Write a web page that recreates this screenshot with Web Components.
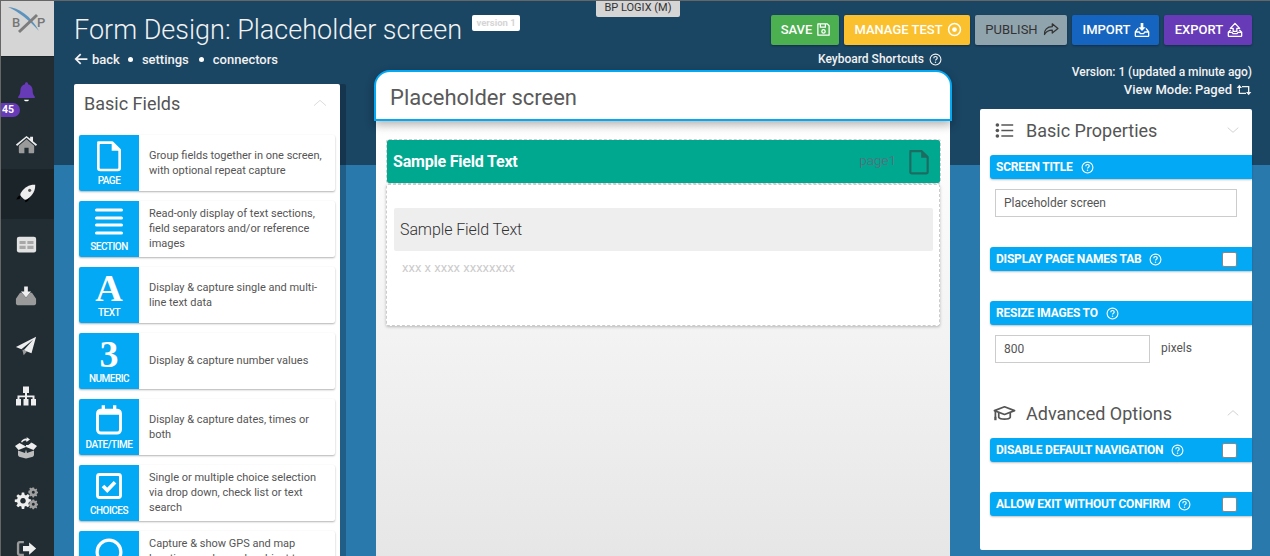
<!DOCTYPE html>
<html>
<head>
<meta charset="utf-8">
<title>Form Design</title>
<style>
  html, body { margin: 0; height: 100%; overflow: hidden; background: #2a79ad; }
  body { font-family: Roboto, "Liberation Sans", sans-serif; }
</style>
</head>
<body>
<bp-app></bp-app>

<script>
// shared icon set, all drawn on a 24 box
const ICONS = {
  bell: '<path fill="currentColor" d="M12 1.5c1 0 1.7.7 1.7 1.6v.6c3.4.8 5.300 3.600 5.300 7 0 4 1 5.600 2.500 7.300.4.5.1 1.300-.6 1.300H3.100c-.7 0-1-.8-.6-1.300C4 16.300 5 14.700 5 10.700c0-3.400 1.900-6.200 5.300-7v-.6c0-.9.7-1.600 1.700-1.600z"/><path fill="#fff" d="M9.300 21.300h5.400c0 1.100-1.200 1.900-2.700 1.900s-2.700-.8-2.700-1.900z"/>',
  home: '<path fill="#9a9a9a" d="M12 6.500l8 6.700V20c0 .5-.4 1-1 1h-4.800v-5.500H9.800V21H5c-.6 0-1-.5-1-1v-6.800z"/><path fill="#eee" d="M12 3l3.800 3.100V3.800h3v4.800l4.200 3.500-1.200 1.500L12 5 2.200 13.600 1 12.100z"/>',
  rocket: '<path fill="#000" d="M7 13c-2.500.3-4.500 2-5.500 5l3.500-.5zM11.500 17.500L11 21c2.500-.8 4.500-2.500 5-5z"/><path fill="#eee" d="M22 2c.4 6-2.500 11.500-8.500 15.500-1.500 1-3 1-4.300-.2l-2.500-2.500c-1.200-1.300-1.200-2.800-.2-4.300C10.500 4.500 16 1.600 22 2z"/><circle cx="16" cy="8" r="1.700" fill="#555"/>',
  table: '<rect x="1" y="3" width="22" height="18" rx="2.500" fill="#e2e2e2"/><path fill="#a8a8a8" d="M4 8h7v3.500H4zM13 8h7v3.500h-7zM4 13.500h7V17H4zM13 13.500h7V17h-7z"/>',
  inbox: '<path fill="#9a9a9a" d="M5.500 8.500h2L12 14l4.500-5.500h2L23 15v5c0 1-.8 2-2 2H3c-1.200 0-2-1-2-2v-5z"/><path fill="#eee" d="M10 1.500h4V7h3.500L12 13.500 6.500 7H10z"/>',
  plane: '<path fill="#eee" d="M23 2L1 13l6 2.500L20 5 9.500 16.500 18 20z"/><path fill="#9a9a9a" d="M8 16l1.500 0 3.500 2-3.500 4z"/>',
  sitemap: '<path fill="#eee" d="M9 1.500h6V8h-2v2.500h7.500V14H22v6.500h-5V14h1.500v-1.700H13V14h1.500v6.500h-5V14H11v-1.700H5.500V14H7v6.500H2V14h1.500v-3.500H11V8H9z"/>',
  boxopen: '<path fill="#eee" d="M1 10l4.500-3 6.500 3.500L18.500 7l4.500 3-3.500 4-7.500-3-7.500 3z"/><path fill="#bdbdbd" d="M4 14.500l7 2.500 1-3.500 1 3.500 7-2.500V19c0 .8-1 1.600-2 2l-6 1.500L6 21c-1-.4-2-1.200-2-2z"/><path fill="#eee" d="M7 6c1-2.500 3.500-4 6-3.500L12.500 1l3.500 2.500-3.500 2.500-.3-1.500c-1.700 0-3.200.5-4 2zM12 9c2.500.3 4.300-.7 5-2.500l1.300.6c-1 2.600-3.300 3.900-6.300 3.400z"/>',
  gears: '<path fill="#eee" fill-rule="evenodd" d="M7.800 6.500h2.400l.4 2.300 1.400.6 1.900-1.300 1.700 1.700-1.300 1.900.6 1.400 2.300.4v2.400l-2.300.4-.6 1.400 1.300 1.900-1.700 1.700-1.900-1.300-1.400.6-.4 2.300H7.800l-.4-2.300-1.400-.6-1.900 1.300-1.700-1.700 1.300-1.900-.6-1.400L.8 16v-2.400l2.300-.4.6-1.400-1.300-1.900 1.700-1.700L6 9.500l1.400-.6zM9 12a2.800 2.800 0 1 0 .01 0z"/><path fill="#a0a0a0" fill-rule="evenodd" d="M18.500 1.500h1.600l.3 1.200 1 .5 1-.6.800 1-.6 1 .4.900 1 .3v1.500l-1 .3-.4 1 .6 1-.9.900-1-.6-1 .4-.3 1.100h-1.500l-.3-1.100-1-.4-1 .6-.9-.9.600-1-.4-1-1.100-.3V4.800l1.100-.3.400-.9-.6-1 .9-1 1 .6 1-.5zm.8 3.200a1.500 1.500 0 1 0 .01 0zM18.500 13.500h1.600l.3 1.100 1 .5 1-.6.800 1-.6 1 .4.900 1 .3v1.500l-1 .3-.4 1 .6 1-.9.900-1-.6-1 .4-.3 1.100h-1.500l-.3-1.100-1-.4-1 .6-.9-.9.600-1-.4-1-1.100-.3v-1.500l1.100-.3.400-.9-.6-1 .9-1 1 .6 1-.5zm.8 3.200a1.500 1.500 0 1 0 .01 0z"/>',
  signout: '<path fill="#9a9a9a" d="M9 3.500v2.500H4.500c-.5 0-.8.300-.8.800v10.400c0 .5.300.8.800.8H9v2.500H4.200C2.400 20.500 1 19.100 1 17.300V6.700C1 4.900 2.400 3.500 4.200 3.500z"/><path fill="#eee" d="M15 5l8 7-8 7v-4H8V9h7z"/>',
  file: '<path fill="none" stroke="currentColor" stroke-width="2" stroke-linejoin="round" d="M4 2h10.500L20 7.500V21a1.500 1.500 0 0 1-1.500 1.500h-13A1.500 1.500 0 0 1 4 21V3.500A1.500 1.500 0 0 1 5.500 2z"/><path fill="currentColor" d="M14 2l6 6h-6z"/>',
  lines: '<path fill="none" stroke="currentColor" stroke-width="2.400" stroke-linecap="round" d="M2 2.400h20M2 8.800h20M2 14.400h20M2 20.800h20"/>',
  calendar: '<rect x="3.400" y="4.600" width="17.200" height="17.200" rx="2.500" fill="none" stroke="currentColor" stroke-width="2.200"/><path fill="currentColor" d="M6.500 1h2.500v4H6.500zM15 1h2.500v4H15zM3.400 4.500h17.200V8H3.400z"/>',
  check: '<rect x="3.400" y="3.400" width="17.200" height="17.200" rx="1.500" fill="none" stroke="currentColor" stroke-width="2.200"/><path fill="none" stroke="currentColor" stroke-width="2.800" d="M7.500 12l3.200 3.200 5.800-6"/>',
  circle: '<circle cx="12" cy="12" r="9.500" fill="none" stroke="currentColor" stroke-width="2.600"/>',
  help: '<circle cx="12" cy="12" r="10" fill="none" stroke="currentColor" stroke-width="2"/><path fill="none" stroke="currentColor" stroke-width="2.200" d="M8.800 9.500c0-1.800 1.400-3 3.200-3s3.200 1.100 3.200 2.800c0 2.400-3.200 2.500-3.200 4.700"/><circle cx="12" cy="17" r="1.400" fill="currentColor"/>',
  save: '<path fill="none" stroke="currentColor" stroke-width="2" stroke-linejoin="round" d="M3 3h15l3 3v15H3z"/><path fill="none" stroke="currentColor" stroke-width="2" d="M7 3v5h8V3"/><circle cx="12" cy="15" r="2.700" fill="none" stroke="currentColor" stroke-width="2"/>',
  target: '<circle cx="12" cy="12" r="9.500" fill="none" stroke="currentColor" stroke-width="2.400"/><circle cx="12" cy="12" r="3.800" fill="currentColor"/>',
  share: '<path fill="none" stroke="currentColor" stroke-width="1.800" stroke-linejoin="round" d="M14.500 4l8 6.500-8 6.500v-4c-5 0-8.500 1.500-11 6-.8-6.500 4-11 11-11z"/>',
  import: '<path fill="currentColor" d="M10 1.500h4V8h3.500L12 13.500 6.500 8H10z"/><path fill="none" stroke="currentColor" stroke-width="2" stroke-linejoin="round" d="M6 9.500L2 15v5.500c0 .5.500 1 1 1h18c.5 0 1-.5 1-1V15l-4-5.500M2 15h6l1.500 2.500h5L16 15h6"/>',
  export: '<path fill="none" stroke="currentColor" stroke-width="2" stroke-linejoin="round" d="M12 2L5 9.500h4.200V14h5.600V9.500H19z"/><path fill="none" stroke="currentColor" stroke-width="2" stroke-linejoin="round" d="M5.500 12L2 15.500v5c0 .5.500 1 1 1h18c.5 0 1-.5 1-1v-5L18.500 12M2 15.500h5.500l1.500 2h6l1.500-2H22"/>',
  retweet: '<path fill="none" stroke="currentColor" stroke-width="2" d="M5 7v10h10M19 17V7H9"/><path fill="currentColor" d="M1 9l4-5 4 5zM15 15l4 5 4-5z"/>',
  list: '<circle cx="3" cy="5" r="2.300" fill="currentColor"/><circle cx="3" cy="12" r="2.300" fill="currentColor"/><circle cx="3" cy="19" r="2.300" fill="currentColor"/><path fill="currentColor" d="M8 4h15v2H8zM8 11h15v2H8zM8 18h15v2H8z"/>',
  grad: '<path fill="none" stroke="currentColor" stroke-width="1.800" stroke-linejoin="round" d="M1.500 9L12 5l10.500 4L12 13z"/><path fill="none" stroke="currentColor" stroke-width="1.800" d="M6 11.500V16c1.500 2.500 10.500 2.500 12 0v-4.500M2.500 9.500V16"/><rect x="1.300" y="15.500" width="2.400" height="3.500" fill="currentColor"/>',
  back: '<path fill="none" stroke="currentColor" stroke-width="3" d="M23 12H3.500M11.500 3.500L3 12l8.500 8.500"/>',
  chevron: '<path fill="none" stroke="currentColor" stroke-width="1.500" d="M3 16l9-8 9 8"/>'
};

function icon(name, size, extra = "") {
  return `<svg width="${size}" height="${size}" viewBox="0 0 24 24" style="display:block;flex:none;${extra}">${ICONS[name]}</svg>`;
}

class BpApp extends HTMLElement {
  constructor() {
    super();
    const shadow = this.attachShadow({ mode: "open" });
    shadow.innerHTML = `
      <style>
        :host { display: flex; width: 1270px; height: 556px; overflow: hidden; position: relative;
          box-sizing: border-box; border-top: 1px solid #666; border-left: 1px solid #666; color: #555;
          font-family: Roboto, "Liberation Sans", sans-serif; }
        main { flex: 1; min-width: 0; padding-right: 18px; padding-left: 20px; overflow: hidden;
          background: linear-gradient(#1a4563 164px, #2a79ad 164px); }
        .cols { display: flex; align-items: flex-start; }
        .tip { position: absolute; left: 595px; top: -1px; width: 84px; height: 17px; box-sizing: border-box;
          background: #d5d5d5; border-radius: 0 0 2px 2px; font-size: 11px; line-height: 16px;
          text-align: center; color: #333; }
      </style>
      <bp-nav></bp-nav>
      <main>
        <bp-header></bp-header>
        <div class="cols">
          <bp-fields></bp-fields>
          <bp-canvas></bp-canvas>
          <bp-props></bp-props>
        </div>
      </main>
      <div class="tip">BP LOGIX (M)</div>
    `;
  }
}

class BpNav extends HTMLElement {
  constructor() {
    super();
    const shadow = this.attachShadow({ mode: "open" });
    const items = [
      ["home", 50, 23], ["rocket", 50, 22, true], ["table", 51, 21], ["inbox", 51, 22], ["plane", 50, 22],
      ["sitemap", 51, 24], ["boxopen", 51, 24], ["gears", 50, 24], ["signout", 50, 21]
    ];
    shadow.innerHTML = `
      <style>
        :host { display: block; width: 53px; flex: none; background: #212d33; color: #dedede; position: relative; overflow: hidden; }
        .logo { height: 55px; background: #d5d5d5; border-bottom: 1px solid #1b2429; }
        .logo svg { display: block; }
        .bell { height: 62px; display: flex; align-items: flex-end; justify-content: center; color: #673ab7; padding: 0 3px 17px 0; box-sizing: border-box; }
        .badge { position: absolute; left: 0; top: 102px; width: 19px; height: 14px; border-radius: 0 8px 8px 0;
          background: #673ab7; color: #fff; font-size: 10.5px; font-weight: 700; line-height: 14px; padding-left: 1px; box-sizing: border-box; }
        .item { display: flex; align-items: center; justify-content: center; padding-right: 3px; }
        .item.on { background: #1b2429; }
      </style>
      <div class="logo">
        <svg width="53" height="55" viewBox="0 0 53 55">
          <path d="M7 6C17 6 30 15 38 30 28 19 18 11 7 6z" fill="#5b93bd"/>
          <path d="M18 31L36 14" stroke="#7d7d7d" stroke-width="3" fill="none"/>
          <text x="11" y="26" font-size="13" font-weight="500" fill="#777" font-family="Roboto, sans-serif">B</text>
          <text x="36" y="26" font-size="13" font-weight="500" fill="#777" font-family="Roboto, sans-serif">P</text>
        </svg>
      </div>
      <div class="bell">${icon("bell", 21)}</div>
      <div class="badge">45</div>
      ${items.map(([n, h, s, on]) => `<div class="item ${on ? "on" : ""}" style="height:${h}px">${icon(n, s)}</div>`).join("")}
    `;
  }
}

class BpButton extends HTMLElement {
  constructor() {
    super();
    const shadow = this.attachShadow({ mode: "open" });
    shadow.innerHTML = `
      <style>
        :host { display: flex; align-items: center; justify-content: center; gap: 4px; height: 30px; box-sizing: border-box;
          border-radius: 2px; background: var(--bg); color: var(--fg, #fff); font-size: 13px; font-weight: var(--w, 500);
          box-shadow: 0 1px 2px rgba(0,0,0,.3); padding: 0 0 1px 2px; }
      </style>
      <slot></slot>${icon(this.getAttribute("icon"), +this.getAttribute("size") || 16)}
    `;
  }
}

class BpHeader extends HTMLElement {
  constructor() {
    super();
    const shadow = this.attachShadow({ mode: "open" });
    const help = icon("help", 13, "margin-left:5px;");
    shadow.innerHTML = `
      <style>
        :host { display: block; height: 69px; color: #f2f2f2; }
        .top { display: flex; align-items: flex-start; height: 44px; padding-top: 14px; box-sizing: border-box; }
        h1 { margin: 0; font-size: 27px; font-weight: 300; line-height: 30px; white-space: nowrap; }
        .ver { margin: 0 auto 0 10px; width: 48px; height: 16px; background: #fff; border-radius: 2px; color: #d5d5d5;
          font-size: 9.5px; font-weight: 700; line-height: 16px; text-align: center; }
        .btns { display: flex; gap: 5px; }
        .sub { display: flex; align-items: center; font-size: 13px; font-weight: 500; height: 24px; padding-top: 4px; box-sizing: border-box; }
        .dot { width: 5px; height: 5px; background: #fff; border-radius: 50%; margin: 0 9px 0 8px; }
        .keys { display: flex; align-items: center; margin-left: auto; margin-right: 310px; font-size: 12px; }
      </style>
      <div class="top">
        <h1>Form Design: Placeholder screen</h1>
        <div class="ver">version 1</div>
        <div class="btns">
          <bp-button icon="save" size="15" style="--bg:#4caf50;width:68px">SAVE</bp-button>
          <bp-button icon="target" size="15" style="--bg:#fbc02d;width:126px">MANAGE TEST</bp-button>
          <bp-button icon="share" size="17" style="--bg:#90a4ae;--fg:#333;--w:400;width:92px">PUBLISH</bp-button>
          <bp-button icon="import" style="--bg:#1565c0;width:87px">IMPORT</bp-button>
          <bp-button icon="export" style="--bg:#673ab7;width:88px">EXPORT</bp-button>
        </div>
      </div>
      <div class="sub">
        ${icon("back", 14, "margin-right:4px;")}<span>back</span><span class="dot"></span><span>settings</span><span class="dot" style="margin-left:10px"></span><span>connectors</span>
        <span class="keys">Keyboard Shortcuts${help}</span>
      </div>
    `;
  }
}

class BpFieldCard extends HTMLElement {
  constructor() {
    super();
    const shadow = this.attachShadow({ mode: "open" });
    const glyph = this.getAttribute("glyph");
    const art = glyph
      ? `<span class="glyph">${glyph}</span>`
      : icon(this.getAttribute("icon"), +this.getAttribute("size") || 30);
    shadow.innerHTML = `
      <style>
        :host { display: flex; height: 56px; margin: 0 5px 10px; background: #fff; border-radius: 2px; overflow: hidden;
          box-shadow: 0 1px 2px rgba(0,0,0,.3); }
        .tile { width: 60px; flex: none; background: #03a9f4; color: #fff; display: flex; flex-direction: column; align-items: center; position: relative; }
        .art { height: 38px; display: flex; align-items: center; justify-content: center; padding-top: 2px; }
        .glyph { font-family: "Liberation Serif", serif; font-weight: 700; font-size: 38px; line-height: 38px; }
        .name { position: absolute; left: 0; right: 0; bottom: 4px; text-align: center; font-size: 10px; font-weight: 500; line-height: 12px; letter-spacing: -.5px; }
        .text { flex: 1; padding: 0 8px 1px 10px; display: flex; align-items: center; font-size: 11px; line-height: 15px; color: #555; }
      </style>
      <div class="tile"><div class="art">${art}</div><div class="name">${this.getAttribute("name")}</div></div>
      <div class="text"><div><slot></slot></div></div>
    `;
  }
}

class BpFields extends HTMLElement {
  constructor() {
    super();
    const shadow = this.attachShadow({ mode: "open" });
    shadow.innerHTML = `
      <style>
        :host { display: block; width: 266px; flex: none; margin: 14px 36px 0 0; height: 600px; background: #fff; border-radius: 2px 2px 0 0;
          box-shadow: 6px 0 0 rgba(0,0,0,.22); }
        .head { display: flex; align-items: center; justify-content: space-between; height: 38px; margin-bottom: 13px; padding: 0 10px; font-size: 18px; color: #555; }
      </style>
      <div class="head"><span>Basic Fields</span>${icon("chevron", 16, "color:#ddd;margin-right:2px;")}</div>
      <slot></slot>
    `;
    this.innerHTML = `
      <bp-field-card name="PAGE" icon="file" size="32">Group fields together in one screen, with optional repeat capture</bp-field-card>
      <bp-field-card name="SECTION" icon="lines" size="30">Read-only display of text sections, field separators and/or reference images</bp-field-card>
      <bp-field-card name="TEXT" glyph="A">Display &amp; capture single and multi-line text data</bp-field-card>
      <bp-field-card name="NUMERIC" glyph="3">Display &amp; capture number values</bp-field-card>
      <bp-field-card name="DATE/TIME" icon="calendar" size="32">Display &amp; capture dates, times or both</bp-field-card>
      <bp-field-card name="CHOICES" icon="check" size="32">Single or multiple choice selection via drop down, check list or text search</bp-field-card>
      <bp-field-card name="GEO" icon="circle" size="30">Capture &amp; show GPS and map locations and search subject to location limits</bp-field-card>
    `;
  }
}

class BpCanvas extends HTMLElement {
  constructor() {
    super();
    const shadow = this.attachShadow({ mode: "open" });
    shadow.innerHTML = `
      <style>
        :host { display: block; width: 574px; flex: none; margin-right: 30px; }
        .title { height: 51px; margin: 0 -2px; box-sizing: border-box; background: #fff; border: 2px solid #03a9f4; border-radius: 16px 16px 0 0;
          padding: 2px 0 0 14px; font-size: 22px; line-height: 47px; color: #5a5a5a; position: relative; box-shadow: 0 4px 10px rgba(0,0,0,.3); }
        .body { height: 440px; padding: 19px 10px 0; box-sizing: border-box;
          background: linear-gradient(#fff, #e6e6e6); }
        .bar { height: 43px; margin-left: 1px; background: #00a890; border-radius: 2px; outline: 1px dashed #ccc; display: flex; align-items: center; padding: 0 6px; box-sizing: border-box; }
        .bar b { font-size: 16px; font-weight: 700; color: #fff; flex: 1; letter-spacing: -.2px; }
        .bar i { font-style: normal; font-size: 13.500px; font-weight: 300; color: #667; margin: 0 10px 4px 0; }
        .bar svg { color: #1c6c62; margin-right: 2px; }
        .page { margin-top: 1px; height: 142px; box-sizing: border-box; border: 1px dashed #ccc; background: #fff; border-radius: 2px;
          box-shadow: 0 1px 3px rgba(0,0,0,.25); padding: 23px 6px 0 7px; }
        .label { height: 43px; background: #eee; border-radius: 2px; padding-left: 6px; font-size: 16px; font-weight: 300; line-height: 43px; color: #333; letter-spacing: -.1px; }
        .hint { margin: 10px 0 0 8px; font-size: 13px; line-height: 14px; color: #ccc; }
      </style>
      <div class="title">Placeholder screen</div>
      <div class="body">
        <div class="bar"><b>Sample Field Text</b><i>page1</i>${icon("file", 26)}</div>
        <div class="page">
          <div class="label">Sample Field Text</div>
          <div class="hint">xxx x xxxx xxxxxxxx</div>
        </div>
      </div>
    `;
  }
}

class BpPropBar extends HTMLElement {
  constructor() {
    super();
    const shadow = this.attachShadow({ mode: "open" });
    const box = this.hasAttribute("check") ? '<span class="box"></span>' : "";
    shadow.innerHTML = `
      <style>
        :host { display: flex; align-items: center; height: 24px; margin-left: 10px; padding-left: 6px; background: #03a9f4; color: #fff;
          border-radius: 3px 0 0 3px; font-size: 12px; font-weight: 700; box-shadow: 0 1px 2px rgba(0,0,0,.25); letter-spacing: -.2px; }
        .box { width: 13px; height: 13px; margin-left: auto; margin-right: 15px; background: #fff; border: 1px solid #888; border-radius: 2px; }
      </style>
      <slot></slot>${icon("help", 13, "margin-left:8px;")}${box}
    `;
  }
}

class BpProps extends HTMLElement {
  constructor() {
    super();
    const shadow = this.attachShadow({ mode: "open" });
    shadow.innerHTML = `
      <style>
        :host { display: block; width: 272px; flex: none; margin-top: -6px; }
        .meta { height: 45px; text-align: right; font-size: 12px; font-weight: 500; line-height: 17px; color: #f2f2f2; letter-spacing: -.05px; }
        .meta div { display: flex; justify-content: flex-end; align-items: center; gap: 4px; }
        .meta .mode { font-size: 13px; letter-spacing: 0; }
        .panel { height: 441px; background: #fff; border-radius: 2px; }
        .head { display: flex; align-items: center; height: 42px; margin-bottom: 4px; padding: 0 12px 0 15px; font-size: 18px; color: #555; }
        .head span { flex: 1; margin-left: 12px; }
        .adv { height: 46px; margin: 27px 0 2px; padding-left: 13px; }
        .adv span { margin-left: 10px; }
        .input { box-sizing: border-box; height: 28px; margin: 10px 0 0 15px; border: 1px solid #ccc; padding-left: 8px; font-size: 12px; line-height: 26px; color: #555; }
        .row { display: flex; align-items: center; }
        .row span { font-size: 12px; margin: 7px 0 0 11px; }
        .gap { height: 30px; }
      </style>
      <div class="meta">
        <div>Version: 1 (updated a minute ago)</div>
        <div class="mode">View Mode: Paged ${icon("retweet", 16)}</div>
      </div>
      <div class="panel">
        <div class="head">${icon("list", 19)}<span>Basic Properties</span>${icon("chevron", 14, "color:#ccc;transform:scaleY(-1);")}</div>
        <bp-prop-bar>SCREEN TITLE</bp-prop-bar>
        <div class="input" style="width:242px">Placeholder screen</div>
        <div class="gap"></div>
        <bp-prop-bar check>DISPLAY PAGE NAMES TAB</bp-prop-bar>
        <div class="gap"></div>
        <bp-prop-bar>RESIZE IMAGES TO</bp-prop-bar>
        <div class="row"><div class="input" style="width:155px">800</div><span>pixels</span></div>
        <div class="head adv">${icon("grad", 23)}<span>Advanced Options</span>${icon("chevron", 14, "color:#ccc;")}</div>
        <bp-prop-bar check>DISABLE DEFAULT NAVIGATION</bp-prop-bar>
        <div class="gap"></div>
        <bp-prop-bar check>ALLOW EXIT WITHOUT CONFIRM</bp-prop-bar>
      </div>
    `;
  }
}

customElements.define("bp-button", BpButton);
customElements.define("bp-nav", BpNav);
customElements.define("bp-header", BpHeader);
customElements.define("bp-field-card", BpFieldCard);
customElements.define("bp-fields", BpFields);
customElements.define("bp-canvas", BpCanvas);
customElements.define("bp-prop-bar", BpPropBar);
customElements.define("bp-props", BpProps);
customElements.define("bp-app", BpApp);
</script>
</body>
</html>
